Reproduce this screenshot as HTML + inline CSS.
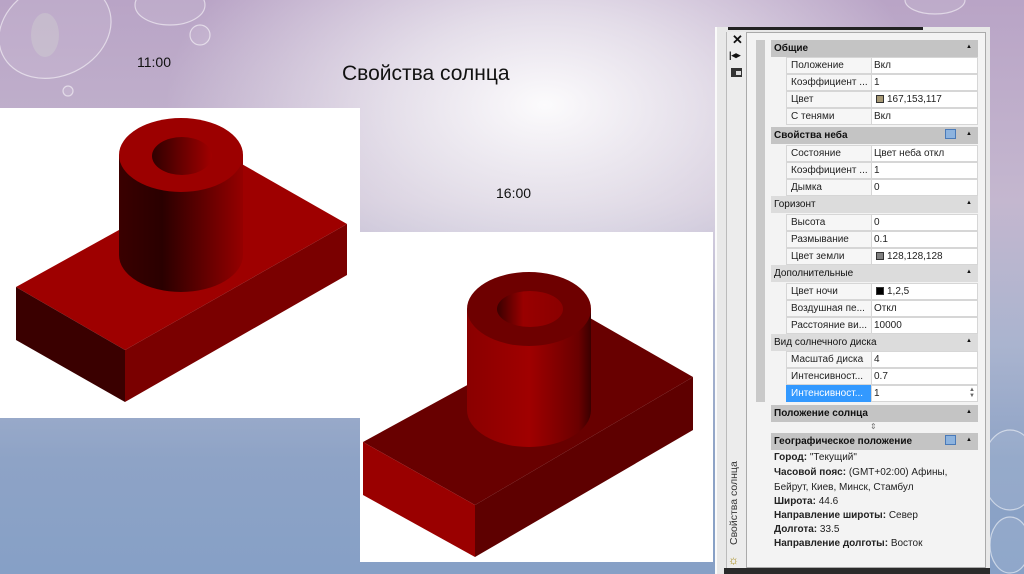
<!DOCTYPE html>
<html><head><meta charset="utf-8"><style>
*{margin:0;padding:0;box-sizing:border-box}
body{width:1024px;height:574px;overflow:hidden;position:relative;font-family:"Liberation Sans","Noto Sans CJK SC",sans-serif;
background:linear-gradient(180deg,#b9a4c6 0%,#c4b7cf 35%,#aab4cf 60%,#8ea3c6 80%,#86a0c6 100%);}
.hl{position:absolute;left:0;top:0;width:1024px;height:574px;background:radial-gradient(ellipse 380px 230px at 545px 105px,rgba(255,255,255,.95) 0%,rgba(245,244,247,.7) 40%,rgba(230,226,235,0) 100%)}
.t{position:absolute;color:#111;white-space:nowrap}
.p{position:absolute;font-size:10px;color:#111;white-space:nowrap}
.hdr{position:absolute;left:771px;width:207px;height:17px;background:#c4c4c4;font-weight:bold;font-size:10px;padding:3px 0 0 3px;color:#111}
.hdr.l{background:#dcdcdc;font-weight:normal}
.hdr:after{content:"▲";position:absolute;right:6px;top:4px;font-size:6px}
.lab{position:absolute;left:786px;width:86px;height:17px;background:#f6f6f6;border:1px solid #d6d6d6;font-size:10px;padding:2px 0 0 4px;overflow:hidden;color:#222}
.val{position:absolute;left:871px;width:107px;height:17px;background:#fff;border:1px solid #d6d6d6;font-size:10px;padding:2px 0 0 2px;color:#222}
.sw{display:inline-block;width:8px;height:8px;border:1px solid #333;margin:0 3px 0 2px;vertical-align:-1px}
.geo{position:absolute;left:774px;font-size:10px;color:#222;white-space:nowrap}
</style></head><body>
<div class="hl"></div>
<svg width="1024" height="574" style="position:absolute;left:0;top:0">
<g fill="rgba(255,255,255,0.08)" stroke="rgba(255,255,255,0.55)" stroke-width="1.2">
<ellipse cx="55" cy="30" rx="58" ry="46" transform="rotate(-25 55 30)"/>
<ellipse cx="170" cy="5" rx="35" ry="20"/>
<circle cx="200" cy="35" r="10"/>
<circle cx="68" cy="91" r="5"/>
<ellipse cx="935" cy="0" rx="30" ry="14"/>
<ellipse cx="1010" cy="470" rx="28" ry="40"/>
<ellipse cx="1010" cy="545" rx="20" ry="28"/>
</g>
<ellipse cx="45" cy="35" rx="14" ry="22" fill="rgba(220,230,210,0.25)"/>
</svg>
<div class="t" style="left:137px;top:54px;font-size:14px">11:00</div>
<div class="t" style="left:342px;top:62px;font-size:21px">Свойства солнца</div>
<div class="t" style="left:496px;top:185px;font-size:14px">16:00</div>

<svg width="1024" height="574" style="position:absolute;left:0;top:0">
<defs>
<linearGradient id="c1" x1="0" x2="1"><stop offset="0" stop-color="#3a0000"/><stop offset=".35" stop-color="#2a0000"/><stop offset="1" stop-color="#950000"/></linearGradient>
<linearGradient id="h1" x1="0" x2="1"><stop offset="0" stop-color="#300000"/><stop offset="1" stop-color="#a00000"/></linearGradient>
<linearGradient id="c2" x1="0" x2="1"><stop offset="0" stop-color="#8a0000"/><stop offset=".5" stop-color="#a00000"/><stop offset=".9" stop-color="#6a0000"/><stop offset="1" stop-color="#3a0000"/></linearGradient>
<linearGradient id="h2" x1="0" x2="1"><stop offset="0" stop-color="#3a0000"/><stop offset=".4" stop-color="#990000"/><stop offset="1" stop-color="#8a0000"/></linearGradient>
</defs>
<rect x="0" y="108" width="360" height="310" fill="#fff"/>
<polygon points="16,287 125,350 347,224 240,163" fill="#9e0000"/>
<polygon points="16,287 125,350 125,402 16,340" fill="#3a0000"/>
<polygon points="125,350 347,224 347,275 125,402" fill="#7a0000"/>
<path d="M119,155 L119,255 A62,37 0 0 0 243,255 L243,155 Z" fill="url(#c1)"/>
<ellipse cx="181" cy="155" rx="62" ry="37" fill="#9c0000"/>
<ellipse cx="182" cy="156" rx="30" ry="19" fill="url(#h1)"/>

<rect x="360" y="232" width="353" height="330" fill="#fff"/>
<polygon points="363,442 475,505 693,377 590,318" fill="#680000"/>
<polygon points="363,442 475,505 475,557 363,495" fill="#9a0000"/>
<polygon points="475,505 693,377 693,430 475,557" fill="#5e0000"/>
<path d="M467,309 L467,410 A62,37 0 0 0 591,410 L591,309 Z" fill="url(#c2)"/>
<ellipse cx="529" cy="309" rx="62" ry="37" fill="#6e0000"/>
<ellipse cx="530" cy="309" rx="33" ry="18" fill="url(#h2)"/>
</svg>

<div style="position:absolute;left:715px;top:27px;width:275px;height:547px;background:#e8e8e8;border-left:2px solid #fafafa"></div>
<div style="position:absolute;left:728px;top:27px;width:195px;height:3px;background:#222"></div>
<div style="position:absolute;left:726px;top:32px;width:20px;height:540px;background:#ececec;border-left:1px solid #bbb"></div>
<div style="position:absolute;left:746px;top:32px;width:240px;height:536px;background:#f3f3f3;border:1px solid #aaa"></div>
<div style="position:absolute;left:724px;top:568px;width:266px;height:6px;background:#2a2a2a"></div>
<div class="p" style="left:732px;top:32px;font-size:13px;font-weight:bold">✕</div>
<div class="p" style="left:729px;top:50px;font-size:9px;font-weight:bold">|◂▸</div>
<div style="position:absolute;left:731px;top:68px;width:11px;height:9px;background:#333;border:1px solid #333"><div style="margin:2px 0 0 4px;width:5px;height:4px;background:#ddd"></div></div>
<div class="p" style="left:728px;top:545px;transform:rotate(-90deg);transform-origin:0 0;font-size:10.5px;color:#333">Свойства солнца</div>
<div class="p" style="left:728px;top:553px;font-size:12px;color:#a08000">☼</div>
<div style="position:absolute;left:756px;top:40px;width:9px;height:362px;background:#c9c9c9"></div>

<div class="hdr" style="top:40px">Общие</div>
<div class="lab" style="top:57px">Положение</div><div class="val" style="top:57px">Вкл</div>
<div class="lab" style="top:74px">Коэффициент ...</div><div class="val" style="top:74px">1</div>
<div class="lab" style="top:91px">Цвет</div><div class="val" style="top:91px"><span class="sw" style="background:#a79975"></span>167,153,117</div>
<div class="lab" style="top:108px">С тенями</div><div class="val" style="top:108px">Вкл</div>
<div class="hdr" style="top:127px">Свойства неба<span style="position:absolute;right:22px;top:2px;width:11px;height:10px;background:#8db3de;border:1px solid #4a7ab8"></span></div>
<div class="lab" style="top:145px">Состояние</div><div class="val" style="top:145px">Цвет неба откл</div>
<div class="lab" style="top:162px">Коэффициент ...</div><div class="val" style="top:162px">1</div>
<div class="lab" style="top:179px">Дымка</div><div class="val" style="top:179px">0</div>
<div class="hdr l" style="top:196px">Горизонт</div>
<div class="lab" style="top:214px">Высота</div><div class="val" style="top:214px">0</div>
<div class="lab" style="top:231px">Размывание</div><div class="val" style="top:231px">0.1</div>
<div class="lab" style="top:248px">Цвет земли</div><div class="val" style="top:248px"><span class="sw" style="background:#808080"></span>128,128,128</div>
<div class="hdr l" style="top:265px">Дополнительные</div>
<div class="lab" style="top:283px">Цвет ночи</div><div class="val" style="top:283px"><span class="sw" style="background:#000"></span>1,2,5</div>
<div class="lab" style="top:300px">Воздушная пе...</div><div class="val" style="top:300px">Откл</div>
<div class="lab" style="top:317px">Расстояние ви...</div><div class="val" style="top:317px">10000</div>
<div class="hdr l" style="top:334px">Вид солнечного диска</div>
<div class="lab" style="top:351px">Масштаб диска</div><div class="val" style="top:351px">4</div>
<div class="lab" style="top:368px">Интенсивност...</div><div class="val" style="top:368px">0.7</div>
<div class="lab" style="top:385px;background:#3399ff;color:#fff;border-color:#3399ff">Интенсивност...</div><div class="val" style="top:385px">1<span style="position:absolute;right:2px;top:1px;font-size:6px;line-height:6px;color:#666">▲<br>▼</span></div>
<div class="hdr" style="top:405px">Положение солнца</div>
<div class="p" style="left:870px;top:422px;font-size:8px;color:#777">⇕</div>
<div class="hdr" style="top:433px">Географическое положение<span style="position:absolute;right:22px;top:2px;width:11px;height:10px;background:#8db3de;border:1px solid #4a7ab8"></span></div>
<div class="geo" style="top:452px"><b>Город:</b> "Текущий"</div>
<div class="geo" style="top:467px"><b>Часовой пояс:</b> (GMT+02:00) Афины,</div>
<div class="geo" style="top:482px">Бейрут, Киев, Минск, Стамбул</div>
<div class="geo" style="top:496px"><b>Широта:</b> 44.6</div>
<div class="geo" style="top:510px"><b>Направление широты:</b> Север</div>
<div class="geo" style="top:524px"><b>Долгота:</b> 33.5</div>
<div class="geo" style="top:538px"><b>Направление долготы:</b> Восток</div>
</body></html>
